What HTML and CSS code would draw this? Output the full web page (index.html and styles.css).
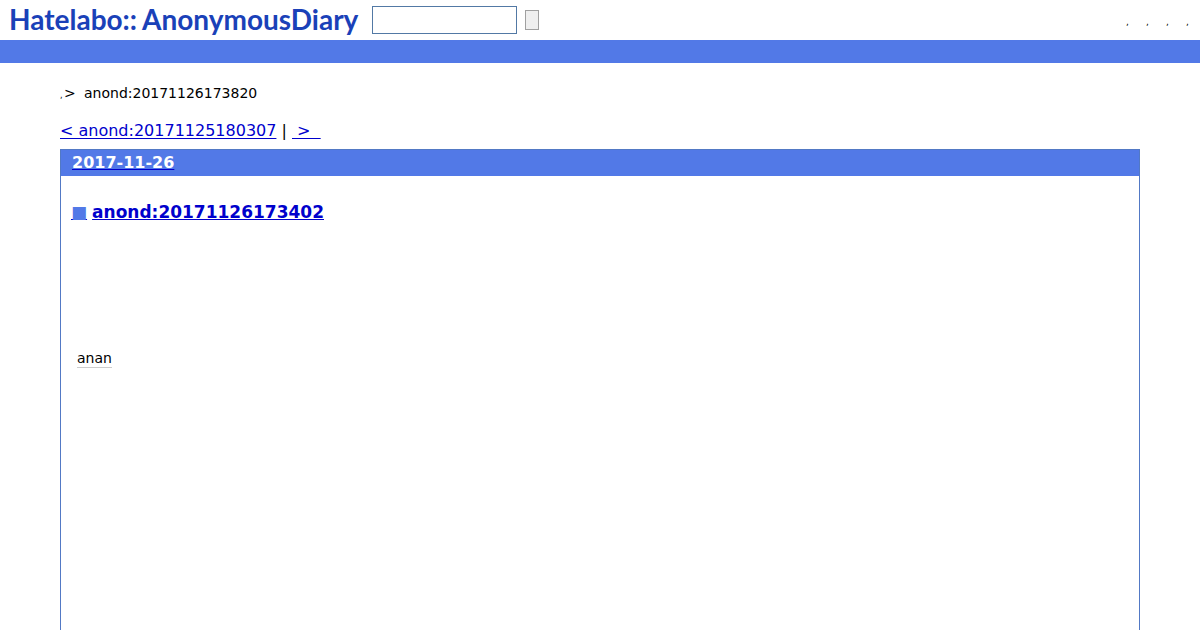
FILE: index.html
```html
<!DOCTYPE html>
<html lang="ja">
<head>
<meta charset="utf-8">
<title>anond:20171126173402</title>
<link rel="stylesheet" href="styles.css">
</head>
<body>
<header class="header">
  <a class="logo" href="#"><span>Hatelabo::</span><span>AnonymousDiary</span></a>
  <form class="search">
    <input class="search-box" type="text" aria-label="Search">
    <button class="search-button" type="button" aria-label="Submit"></button>
  </form>
  <nav class="menu"><a href="#">,</a><a href="#">,</a><a href="#">,</a><a href="#">,</a></nav>
</header>
<div class="bar"></div>
<main class="content">
  <div class="breadcrumb"><a class="dot" href="#">,</a><span class="arrow">&gt;</span><span>anond:20171126173820</span></div>
  <div class="pager"><a href="#">&lt; anond:20171125180307</a> | <a class="next" href="#">&nbsp;&gt;&nbsp;&nbsp;</a></div>
  <article class="day">
    <h2 class="date"><a href="#"><span>2017-11-26</span></a></h2>
    <section class="entry">
      <h3 class="title"><a class="mark" href="#"><span>■</span></a><a href="#">anond:20171126173402</a></h3>
      <p class="text"><a class="keyword" href="#">anan</a></p>
    </section>
  </article>
</main>
</body>
</html>
```
FILE: styles.css
```css
* { box-sizing: border-box; }
body {
  margin: 0;
  min-height: 100vh;
  display: flex;
  flex-direction: column;
  background: #fff;
  color: #000;
  font-family: "DejaVu Sans", sans-serif;
  font-size: 16px;
}
a { color: #0000cc; }
.header {
  display: flex;
  align-items: center;
  height: 40px;
  padding: 0 10px 0 8px;
}
.logo {
  display: flex;
  gap: 5px;
  width: 364px;
  padding: 0 0 2px 1px;
  color: #1a41b8;
  font: bold 28px/38px Lato, sans-serif;
  text-decoration: none;
}
.search { display: flex; align-items: center; gap: 8px; }
.search-box {
  width: 145px;
  height: 28px;
  border: 1px solid #5279a5;
  background: #fff;
}
.search-button {
  width: 14px;
  height: 20px;
  padding: 0;
  border: 1px solid #a0a0a0;
  background: #efefef;
}
.menu {
  display: flex;
  gap: 16px;
  margin-left: auto;
  padding-top: 4px;
}
.menu a {
  width: 4px;
  color: #000;
  font-size: 9px;
  line-height: 16px;
  text-decoration: none;
}
.bar { height: 23px; background: #5279e7; }
.content {
  flex: 1;
  display: flex;
  flex-direction: column;
  padding: 20px 60px 0;
}
.breadcrumb {
  display: flex;
  align-items: baseline;
  font-size: 14px;
  line-height: 20px;
}
.dot { width: 4px; color: #000; font-size: 8px; text-decoration: none; }
.arrow { width: 20px; }
.pager { margin-top: 15px; line-height: 20px; }
.pager a { text-underline-offset: 2px; }
.day {
  flex: 1;
  margin-top: 8px;
  border: 1px solid #5279c5;
  border-bottom: 0;
}
.date {
  margin: 0;
  padding: 0 11px;
  background: #5279e7;
  font-size: 16px;
  line-height: 26px;
}
.date span { color: #fff; }
.entry { padding: 25px 10px 0; }
.title {
  display: flex;
  gap: 5px;
  margin: 0;
  font-size: 17px;
  line-height: 22px;
}
.mark span { color: #5279e7; }
.text { margin: 0; padding: 125px 6px 0; font-size: 14px; line-height: 20px; }
.keyword {
  color: #000;
  text-decoration: none;
  border-bottom: 1px solid #ccc;
  padding-bottom: 1px;
}
```
